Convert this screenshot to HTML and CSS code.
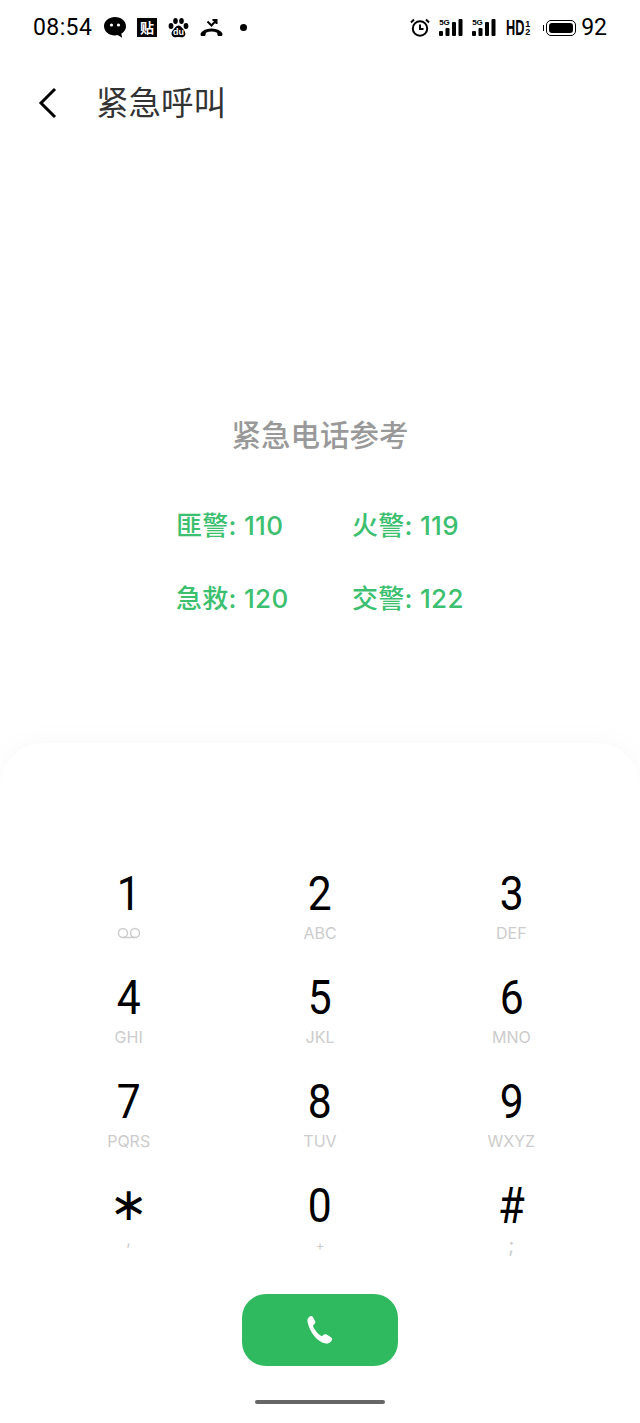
FILE: index.html
```html
<!DOCTYPE html>
<html lang="zh-CN">
<head>
    <meta charset="UTF-8">
    <meta name="viewport" content="width=device-width, initial-scale=1.0">
    <title>紧急呼叫</title>
    <link rel="stylesheet" href="styles.css">
</head>
<body>
    <div class="page">
        <div class="status">
            <div class="status-left">
                <span class="time">08:54</span>
                <svg class="ic-wechat" viewBox="0 0 22 21"><path d="M11 0C4.900 0 0 4 0 9.200c0 5.100 4.900 9.200 11 9.200 1 0 1.700-.1 2.600-.3l4.600 2.600-.9-4c2.900-1.700 4.700-4.400 4.700-7.500C22 4 17.100 0 11 0z"/><circle cx="7.500" cy="8" r="1.600" fill="#fff"/><circle cx="14.500" cy="8" r="1.600" fill="#fff"/></svg>
                <span class="tie">贴</span>
                <span class="paw">
                    <svg viewBox="0 0 21 20"><ellipse cx="3" cy="8" rx="2.400" ry="3"/><ellipse cx="7.500" cy="3" rx="2.300" ry="3"/><ellipse cx="13.500" cy="3" rx="2.300" ry="3"/><ellipse cx="18" cy="8" rx="2.400" ry="3"/><path d="M10.500 7.500c-2.500 0-3.500 2.500-5.200 4.200C3.500 13.500 3.200 15 3.800 17c.6 1.800 2.700 2.600 4.200 2.300 1.700-.3 3.300-.3 5 0 1.500.3 3.600-.5 4.200-2.300.6-2-.3-3.500-1.500-5.300-1.700-1.700-2.700-4.200-5.200-4.200z"/></svg>
                    <span class="du">du</span>
                </span>
                <svg class="ic-missed" viewBox="0 0 23 18"><path d="M.5 15.500c0-1.200.8-2.400 2-3.300C5 10.400 8.100 9.500 11.500 9.500s6.500.9 9 2.700c1.200.9 2 2.100 2 3.300 0 .9-.6 1.500-1.400 1.500h-2.300c-.7 0-1.200-.4-1.300-1l-.4-2.200c-1.800-.9-3.700-1.300-5.600-1.300s-3.800.4-5.600 1.300L5.500 16c-.1.600-.6 1-1.300 1H1.900C1.100 17 .5 16.400.5 15.500z"/><path class="line" d="M7.500 2.500l4 4 4.500-5M12.500 1h4v4"/></svg>
                <span class="dot"></span>
            </div>
            <div class="status-right">
                <svg class="ic-alarm" viewBox="0 0 20 19"><circle class="line" cx="10" cy="10.500" r="7.200"/><path class="line" d="M10 6.500v4.500h3.500M1 4.500l3-3M19 4.500l-3-3"/></svg>
                <div class="signal">
                    <span class="net">5G</span>
                    <svg viewBox="0 0 24 17"><rect x="0" y="12" width="4" height="5" rx="1"/><rect x="6.500" y="9" width="4" height="8" rx="1"/><rect x="13" y="3" width="4" height="14" rx="1"/><rect x="19.500" y="0" width="4" height="17" rx="1"/></svg>
                </div>
                <div class="signal">
                    <span class="net">5G</span>
                    <svg viewBox="0 0 24 17"><rect x="0" y="12" width="4" height="5" rx="1"/><rect x="6.500" y="9" width="4" height="8" rx="1"/><rect x="13" y="3" width="4" height="14" rx="1"/><rect x="19.500" y="0" width="4" height="17" rx="1"/></svg>
                </div>
                <div class="hd"><span class="hd-main">HD</span><span class="hd-sub"><span>1</span><span>2</span></span></div>
                <div class="battery"><span class="nub"></span><span class="shell"><span class="level"></span></span></div>
                <span class="percent">92</span>
            </div>
        </div>

        <header>
            <svg class="back" viewBox="0 0 20 32"><path d="M17 2L3 16l14 14"/></svg>
            <h1>紧急呼叫</h1>
        </header>

        <div class="hint">
            <h2>紧急电话参考</h2>
            <div class="numbers">
                <span>匪警: 110</span>
                <span>火警: 119</span>
                <span>急救: 120</span>
                <span>交警: 122</span>
            </div>
        </div>

        <div class="sheet">
            <div class="keypad">
                <div class="key"><span class="digit">1</span>
                    <svg class="voicemail" viewBox="0 0 24 12"><circle cx="6" cy="6" r="4.500"/><circle cx="18" cy="6" r="4.500"/><path d="M6 10.500h12"/></svg>
                </div>
                <div class="key"><span class="digit">2</span><span class="letters">ABC</span></div>
                <div class="key"><span class="digit">3</span><span class="letters">DEF</span></div>
                <div class="key"><span class="digit">4</span><span class="letters">GHI</span></div>
                <div class="key"><span class="digit">5</span><span class="letters">JKL</span></div>
                <div class="key"><span class="digit">6</span><span class="letters">MNO</span></div>
                <div class="key"><span class="digit">7</span><span class="letters">PQRS</span></div>
                <div class="key"><span class="digit">8</span><span class="letters">TUV</span></div>
                <div class="key"><span class="digit">9</span><span class="letters">WXYZ</span></div>
                <div class="key"><span class="digit star">∗</span><span class="letters comma">,</span></div>
                <div class="key"><span class="digit">0</span><span class="letters plus">+</span></div>
                <div class="key"><span class="digit hash">#</span><span class="letters semi">;</span></div>
            </div>
            <button class="call">
                <svg viewBox="0 0 28 30"><path d="M1.500 6.500C1 4.200 2.500 2 4.300 1.200c1.200-.5 2.200-.1 2.800 1l2 4c.5 1 .3 1.900-.4 2.600L7.500 10c-.5.500-.6 1-.3 1.700 1.600 3.600 4.300 6.800 7.700 9.100.6.400 1.100.3 1.600-.1l1.500-1.100c.9-.6 1.800-.6 2.700 0l4.500 3c1 .7 1.300 1.600.7 2.700-1 1.900-3.300 3.700-5.700 3.300C11 27.400 3.200 16.500 1.500 6.500z"/></svg>
            </button>
            <div class="home-bar"></div>
        </div>
    </div>
</body>
</html>
```
FILE: styles.css
```css
* {
    margin: 0;
    padding: 0;
    box-sizing: border-box;
}
body {
    background: #fff;
    font-family: Inter, "Noto Sans CJK SC", sans-serif;
}
.page {
    width: 640px;
    height: 1423px;
    display: flex;
    flex-direction: column;
    background: #fff;
    overflow: hidden;
}
.line {
    fill: none;
    stroke: #000;
    stroke-width: 2;
}

/* status bar */
.status {
    height: 54px;
    padding: 17px 33px 0;
    display: flex;
    justify-content: space-between;
    align-items: flex-start;
}
.status-left, .status-right {
    display: flex;
    align-items: center;
    height: 21px;
}
.status-left {
    gap: 11px;
}
.time {
    font-family: Roboto, sans-serif;
    font-size: 23px;
    letter-spacing: 0.4px;
    color: #000;
    width: 60px;
}
.ic-wechat {
    width: 22px;
    height: 21px;
}
.tie {
    width: 20px;
    height: 19px;
    background: #000;
    color: #fff;
    font-size: 14px;
    line-height: 19px;
    text-align: center;
    font-weight: 700;
}
.paw {
    position: relative;
    width: 21px;
    height: 20px;
}
.paw svg {
    width: 21px;
    height: 20px;
    display: block;
}
.du {
    position: absolute;
    left: 0;
    right: 0;
    top: 9px;
    font-family: "Liberation Sans", sans-serif;
    font-size: 9px;
    line-height: 10px;
    font-weight: 700;
    color: #fff;
    text-align: center;
}
.ic-missed {
    width: 23px;
    height: 18px;
}
.dot {
    width: 7px;
    height: 7px;
    margin-left: 6px;
    border-radius: 50%;
    background: #000;
}
.ic-alarm {
    width: 20px;
    height: 19px;
}
.signal {
    position: relative;
    width: 24px;
    height: 17px;
    margin-left: 9px;
}
.signal svg {
    width: 24px;
    height: 17px;
    display: block;
}
.net {
    position: absolute;
    left: 0;
    top: 0;
    font-family: "Liberation Sans", sans-serif;
    font-size: 8px;
    line-height: 8px;
    font-weight: 700;
    color: #000;
}
.hd {
    display: flex;
    align-items: center;
    width: 25px;
    margin-left: 10px;
    font-family: "Liberation Sans", sans-serif;
    color: #000;
}
.hd-main {
    width: 19px;
    font-size: 22px;
    line-height: 21px;
    font-weight: 700;
    transform: scaleX(0.58);
    transform-origin: left center;
}
.hd-sub {
    display: flex;
    flex-direction: column;
    font-size: 9px;
    line-height: 8px;
    font-weight: 700;
}
.battery {
    display: flex;
    align-items: center;
    margin-left: 12px;
    gap: 2px;
}
.nub {
    width: 1px;
    height: 6px;
    background: #000;
}
.shell {
    width: 30px;
    height: 16px;
    padding: 2px;
    border: 1.500px solid #000;
    border-radius: 5px;
    display: block;
}
.level {
    display: block;
    height: 100%;
    background: #000;
    border-radius: 3px;
}
.percent {
    font-family: Roboto, sans-serif;
    font-size: 23px;
    color: #000;
    margin-left: 5px;
}

/* title row */
header {
    height: 100px;
    padding-left: 38px;
    display: flex;
    align-items: center;
}
.back {
    width: 20px;
    height: 32px;
    margin-bottom: 3px;
    fill: none;
    stroke: #000;
    stroke-width: 3;
}
h1 {
    margin-left: 38px;
    font-size: 32.500px;
    line-height: 40px;
    font-weight: 400;
    color: #333;
}

/* emergency numbers */
.hint {
    padding-top: 260px;
}
h2 {
    font-size: 29.500px;
    line-height: 42px;
    font-weight: 500;
    color: #999;
    text-align: center;
}
.numbers {
    margin-top: 50px;
    margin-left: 176px;
    display: grid;
    grid-template-columns: 176px 176px;
    row-gap: 33px;
    font-size: 26px;
    line-height: 40px;
    font-weight: 500;
    letter-spacing: 0.3px;
    color: #3cc06f;
}

/* dial sheet */
.sheet {
    margin-top: auto;
    height: 680px;
    padding-top: 119px;
    border-radius: 44px 44px 0 0;
    background: #fff;
    box-shadow: 0 -6px 24px rgba(0, 0, 0, 0.025);
    display: flex;
    flex-direction: column;
    align-items: center;
}
.keypad {
    width: 574px;
    display: grid;
    grid-template-columns: repeat(3, 1fr);
    row-gap: 22px;
}
.key {
    height: 82px;
    display: flex;
    flex-direction: column;
    align-items: center;
}
.digit {
    height: 60px;
    font-family: Roboto, sans-serif;
    font-size: 49px;
    line-height: 64px;
    color: #000;
    transform: scaleX(0.87);
}
.star {
    font-family: "DejaVu Sans", sans-serif;
    font-size: 46px;
    line-height: 60px;
    transform: none;
}
.hash {
    font-size: 50px;
}
.letters {
    height: 22px;
    font-size: 16px;
    line-height: 22px;
    color: #ccc;
}
.plus {
    font-size: 13px;
}
.comma {
    line-height: 10px;
}
.semi {
    font-size: 20px;
}
.voicemail {
    width: 24px;
    height: 12px;
    margin-top: 5px;
    fill: none;
    stroke: #ccc;
    stroke-width: 1.500;
}
.call {
    margin-top: 38px;
    width: 156px;
    height: 72px;
    border: none;
    border-radius: 24px;
    background: #2fba5f;
    display: flex;
    align-items: center;
    justify-content: center;
}
.call svg {
    width: 28px;
    height: 30px;
    fill: #fff;
}
.home-bar {
    margin-top: 34px;
    width: 130px;
    height: 4px;
    border-radius: 2px;
    background: #666;
}
```
